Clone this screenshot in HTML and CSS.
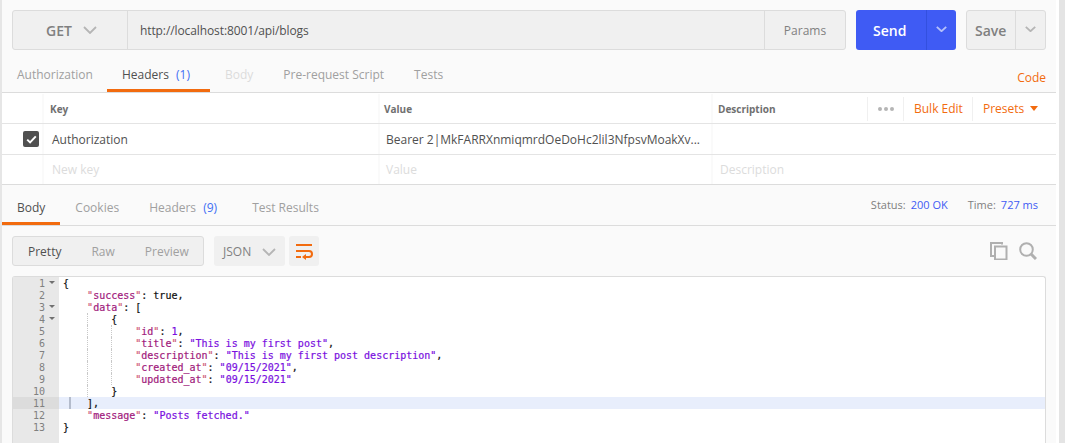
FILE: index.html
```html
<!DOCTYPE html>
<html lang="en">
<head>
    <meta charset="UTF-8">
    <title>Postman</title>
    <link rel="stylesheet" href="styles.css">
</head>
<body>
    <main class="builder">
        <section class="url-row">
            <div class="url-bar">
                <div class="method">GET
                    <svg class="chev" width="14" height="8" viewBox="0 0 14 8"><path d="M1 1l6 6 6-6" /></svg>
                </div>
                <div class="url">http://localhost:8001/api/blogs</div>
                <div class="params">Params</div>
            </div>
            <div class="send">
                <span class="send-label">Send</span>
                <span class="send-more"><svg class="chev" width="11" height="6" viewBox="0 0 11 6"><path d="M.8.8l4.7 4.4L10.200.8" /></svg></span>
            </div>
            <div class="save">
                <span class="save-label">Save</span>
                <span class="save-more"><svg class="chev" width="11" height="6" viewBox="0 0 11 6"><path d="M.8.8l4.7 4.4L10.200.8" /></svg></span>
            </div>
        </section>

        <nav class="tabs req-tabs">
            <span class="tab first">Authorization</span>
            <span class="tab active with-count">Headers <b class="count">(1)</b></span>
            <span class="tab off">Body</span>
            <span class="tab">Pre-request Script</span>
            <span class="tab">Tests</span>
            <span class="code-link">Code</span>
        </nav>

        <div class="table">
            <div class="row head">
                <div class="c-check"></div>
                <div class="c-key">Key</div>
                <div class="c-value">Value</div>
                <div class="c-desc head-desc">
                    <span class="desc-title">Description</span>
                    <span class="dots"><i></i><i></i><i></i></span>
                    <span class="bulk">Bulk Edit</span>
                    <span class="presets">Presets <em class="caret"></em></span>
                </div>
            </div>
            <div class="row">
                <div class="c-check"><span class="checkbox"><svg width="11" height="9" viewBox="0 0 11 9"><path d="M1.200 4.600l2.900 2.800 5.700-6" /></svg></span></div>
                <div class="c-key">Authorization</div>
                <div class="c-value">Bearer 2|MkFARRXnmiqmrdOeDoHc2lil3NfpsvMoakXv...</div>
                <div class="c-desc"></div>
            </div>
            <div class="row empty">
                <div class="c-check"></div>
                <div class="c-key">New key</div>
                <div class="c-value">Value</div>
                <div class="c-desc">Description</div>
            </div>
        </div>

        <nav class="tabs res-tabs">
            <span class="tab active">Body</span>
            <span class="tab">Cookies</span>
            <span class="tab with-count">Headers <b class="count">(9)</b></span>
            <span class="tab">Test Results</span>
            <div class="stats">
                <span>Status:</span><b>200 OK</b>
                <span class="time">Time:</span><b>727 ms</b>
            </div>
        </nav>

        <div class="toolbar">
            <div class="views">
                <span class="view on">Pretty</span>
                <span class="view">Raw</span>
                <span class="view">Preview</span>
            </div>
            <div class="format">JSON
                <svg class="chev" width="14" height="8" viewBox="0 0 14 8"><path d="M1 1l6 6 6-6" /></svg>
            </div>
            <div class="wrap">
                <svg width="18" height="15" viewBox="0 0 18 15"><path d="M1 1h16M1 7h13a3 3 0 0 1 0 6H10M1 13h5" /><path class="arrow" d="M11 10v6l-4-3z" /></svg>
            </div>
            <div class="tools">
                <svg width="18" height="18" viewBox="0 0 18 18"><path d="M12 2.500V1H1v13h3" /><path d="M5 4.500h11.500V17.500H5z" /></svg>
                <svg width="18" height="18" viewBox="0 0 18 18"><circle cx="7.500" cy="7.500" r="6.300" /><path class="handle" d="M12 12l5 5" /></svg>
            </div>
        </div>

        <div class="editor">
            <div class="gutter">
                <div class="ln fold">1</div>
                <div class="ln">2</div>
                <div class="ln fold">3</div>
                <div class="ln fold">4</div>
                <div class="ln">5</div>
                <div class="ln">6</div>
                <div class="ln">7</div>
                <div class="ln">8</div>
                <div class="ln">9</div>
                <div class="ln">10</div>
                <div class="ln cur">11</div>
                <div class="ln">12</div>
                <div class="ln">13</div>
            </div>
            <pre class="code"><div class="line">{</div><div class="line">    <span class="k"><span class="q">"</span>success<span class="q">"</span></span>: true,</div><div class="line">    <span class="k"><span class="q">"</span>data<span class="q">"</span></span>: [</div><div class="line">    <i class="g"></i>    {</div><div class="line">    <i class="g"></i>    <i class="g"></i>    <span class="k"><span class="q">"</span>id<span class="q">"</span></span>: <span class="n">1</span>,</div><div class="line">    <i class="g"></i>    <i class="g"></i>    <span class="k"><span class="q">"</span>title<span class="q">"</span></span>: <span class="s">"This is my first post"</span>,</div><div class="line">    <i class="g"></i>    <i class="g"></i>    <span class="k"><span class="q">"</span>description<span class="q">"</span></span>: <span class="s">"This is my first post description"</span>,</div><div class="line">    <i class="g"></i>    <i class="g"></i>    <span class="k"><span class="q">"</span>created_at<span class="q">"</span></span>: <span class="s">"09/15/2021"</span>,</div><div class="line">    <i class="g"></i>    <i class="g"></i>    <span class="k"><span class="q">"</span>updated_at<span class="q">"</span></span>: <span class="s">"09/15/2021"</span></div><div class="line">    <i class="g"></i>    }</div><div class="line cur"><i class="bar"></i>    ],</div><div class="line">    <span class="k"><span class="q">"</span>message<span class="q">"</span></span>: <span class="s">"Posts fetched."</span></div><div class="line">}</div></pre>
        </div>
    </main>
    <div class="scrollbar"></div>
</body>
</html>
```

FILE: styles.css
```css
* {
    margin: 0;
    padding: 0;
    box-sizing: border-box;
}

html, body {
    height: 100%;
    overflow: hidden;
}

body {
    display: flex;
    background: #fff;
    font-family: "Open Sans", sans-serif;
    font-size: 12px;
    color: #808080;
}

.builder {
    width: 1056px;
    height: 443px;
    border-left: 2px solid #e6e6e6;
    background: #fafafa;
    overflow: hidden;
}

.scrollbar {
    width: 6px;
    height: 443px;
    margin-left: 3px;
    background: #e4e4e4;
}

.chev {
    fill: none;
    stroke: #b5b5b5;
    stroke-width: 1.800;
}

/* url row */
.url-row {
    display: flex;
    height: 40px;
    margin: 10px 10px 0 10px;
}

.url-bar {
    display: flex;
    width: 834px;
    background: #f0f0f0;
    border: 1px solid #dcdcdc;
    border-radius: 3px;
    align-items: stretch;
}

.method {
    display: flex;
    align-items: center;
    gap: 11px;
    width: 115px;
    padding-left: 33px;
    border-right: 1px solid #dcdcdc;
    font-size: 14px;
    font-weight: 600;
    color: #808080;
}

.url {
    flex: 1;
    padding-left: 12px;
    line-height: 39px;
    letter-spacing: -0.1px;
    color: #505050;
}

.params {
    width: 81px;
    border-left: 1px solid #dcdcdc;
    text-align: center;
    line-height: 39px;
    color: #808080;
}

.send {
    display: flex;
    width: 100px;
    margin-left: 10px;
    background: #3f5bf4;
    border-radius: 3px;
    color: #fff;
    font-size: 14px;
    font-weight: 600;
}

.send-label {
    width: 70px;
    padding-left: 17px;
    line-height: 41px;
}

.send-more {
    display: flex;
    flex: 1;
    align-items: center;
    justify-content: center;
    border-left: 1px solid #3350df;
    padding-bottom: 3px;
}

.send-more .chev {
    stroke: #b5c0fa;
}

.save {
    display: flex;
    width: 80px;
    margin-left: 10px;
    background: #f0f0f0;
    border: 1px solid #dcdcdc;
    border-radius: 3px;
    font-size: 14px;
    font-weight: 600;
}

.save-label {
    width: 48px;
    padding-left: 8px;
    line-height: 39px;
}

.save-more {
    display: flex;
    flex: 1;
    align-items: center;
    justify-content: center;
    border-left: 1px solid #dcdcdc;
    padding-bottom: 3px;
}

/* tabs */
.tabs {
    display: flex;
    align-items: stretch;
    border-bottom: 1px solid #dcdcdc;
    color: #a0a0a0;
}

.req-tabs {
    height: 43px;
}

.res-tabs {
    height: 41px;
}

.tab {
    padding: 0 15px;
    line-height: 49px;
    white-space: nowrap;
}

.res-tabs .tab {
    line-height: 46px;
}

.tab.first {
    margin-right: -1px;
}

.tab.with-count {
    padding-right: 20px;
}

.tab.active {
    color: #505050;
    border-bottom: 3px solid #f26b0f;
}

.tab.off {
    color: #dcdcdc;
}

.count {
    margin-left: 4px;
    font-weight: 400;
    color: #3f6ff4;
}

.code-link {
    margin-left: auto;
    padding-right: 10px;
    line-height: 55px;
    color: #f26b0f;
}

.stats {
    display: flex;
    gap: 5px;
    margin-left: auto;
    padding-right: 18px;
    font-size: 11px;
    line-height: 39px;
    color: #808080;
}

.stats b {
    font-weight: 400;
    color: #3f5bf4;
}

.stats .time {
    margin-left: 15px;
}

/* headers table */
.table {
    background: #fff;
    border-bottom: 1px solid #dcdcdc;
}

.row {
    display: flex;
    height: 31px;
    border-bottom: 1px solid #e4e4e4;
    align-items: stretch;
    color: #505050;
}

.row.head {
    padding-top: 1px;
    font-size: 10px;
    font-weight: 700;
    color: #707070;
}

.row.empty {
    height: 29px;
    border-bottom: 0;
    color: #dcdcdc;
}

.row > div {
    display: flex;
    align-items: center;
    border-right: 2px solid #fafafa;
    white-space: nowrap;
}

.c-check {
    width: 42px;
    justify-content: center;
    padding-left: 18px;
}

.c-key {
    width: 336px;
    padding-left: 8px;
}

.head .c-key {
    padding-left: 6px;
}

.head .c-value {
    padding-left: 4px;
}

.c-value {
    width: 333px;
    padding-left: 6px;
}

.c-desc {
    flex: 1;
    padding-left: 7px;
    border-right: 0 !important;
}

.head .head-desc {
    padding-left: 5px;
}

.checkbox {
    display: flex;
    align-items: center;
    justify-content: center;
    width: 16px;
    height: 16px;
    background: #505050;
    border-radius: 2px;
}

.checkbox path {
    fill: none;
    stroke: #fff;
    stroke-width: 2;
}

.desc-title {
    width: 149px;
}

.dots {
    display: flex;
    gap: 2px;
    width: 37px;
    height: 24px;
    align-items: center;
    justify-content: center;
    border-left: 1px solid #f0f0f0;
    border-right: 1px solid #f0f0f0;
}

.dots i {
    width: 4px;
    height: 4px;
    border-radius: 50%;
    background: #b5b5b5;
}

.bulk, .presets {
    font-size: 12px;
    font-weight: 400;
    color: #f26b0f;
}

.bulk {
    width: 69px;
    height: 24px;
    padding-left: 10px;
    line-height: 24px;
    border-right: 1px solid #f0f0f0;
}

.presets {
    padding-left: 10px;
}

.caret {
    display: inline-block;
    margin-left: 3px;
    margin-bottom: 2px;
    border-left: 4.500px solid transparent;
    border-right: 4.500px solid transparent;
    border-top: 5px solid #f26b0f;
}

/* response toolbar */
.toolbar {
    display: flex;
    height: 30px;
    margin: 10px;
}

.views {
    display: flex;
    width: 192px;
    background: #f0f0f0;
    border: 1px solid #dcdcdc;
    border-radius: 3px;
}

.view {
    padding: 0 15px;
    line-height: 30px;
    color: #a0a0a0;
}

.view.on {
    color: #505050;
}

.format {
    display: flex;
    align-items: center;
    gap: 11px;
    width: 71px;
    margin-left: 10px;
    padding-left: 9px;
    padding-top: 1px;
    background: #f0f0f0;
    border-radius: 3px;
}

.wrap {
    display: flex;
    align-items: center;
    justify-content: center;
    width: 30px;
    margin-left: 4px;
    background: #f0f0f0;
    border-radius: 3px;
}

.wrap svg {
    overflow: visible;
}

.wrap path {
    fill: none;
    stroke: #f26b0f;
    stroke-width: 2;
}

.wrap .arrow {
    fill: #f26b0f;
    stroke: none;
}

.tools {
    display: flex;
    gap: 11px;
    align-items: center;
    margin-left: auto;
    padding-right: 9px;
}

.tools svg {
    fill: none;
    stroke: #b0b0b0;
    stroke-width: 2;
}

.tools .handle {
    stroke-width: 3;
}

/* editor */
.editor {
    display: flex;
    height: 170px;
    margin: 0 10px;
    background: #fff;
    border: 1px solid #dcdcdc;
    border-bottom: 0;
    border-radius: 3px 3px 0 0;
    font-family: "DejaVu Sans Mono", monospace;
    font-size: 10px;
    line-height: 14px;
}

.gutter {
    width: 46px;
    background: #e8e8e8;
    color: #808080;
    text-align: right;
}

.ln {
    position: relative;
    height: 12px;
    padding-right: 14px;
}

.ln.cur {
    background: #dcdcdc;
}

.fold::after {
    content: "";
    position: absolute;
    top: 4px;
    right: 4px;
    border-left: 3px solid transparent;
    border-right: 3px solid transparent;
    border-top: 3px solid #707070;
}

.code {
    flex: 1;
    font: inherit;
    color: #111;
    -webkit-text-stroke: 0.2px;
}

.line {
    position: relative;
    height: 12px;
    padding-left: 4px;
}

.line.cur {
    background: #e8eefc;
}

.bar {
    position: absolute;
    top: 0;
    left: 10px;
    width: 2px;
    height: 12px;
    background: #b4bccc;
}

.g {
    display: inline-block;
    width: 1px;
    height: 12px;
    margin-right: -1px;
    border-left: 1px dotted #c8c8c8;
    vertical-align: top;
}

.k {
    color: #a11a7c;
}

.q {
    color: #d0607a;
}

.s, .n {
    color: #7a0fe0;
}
```
